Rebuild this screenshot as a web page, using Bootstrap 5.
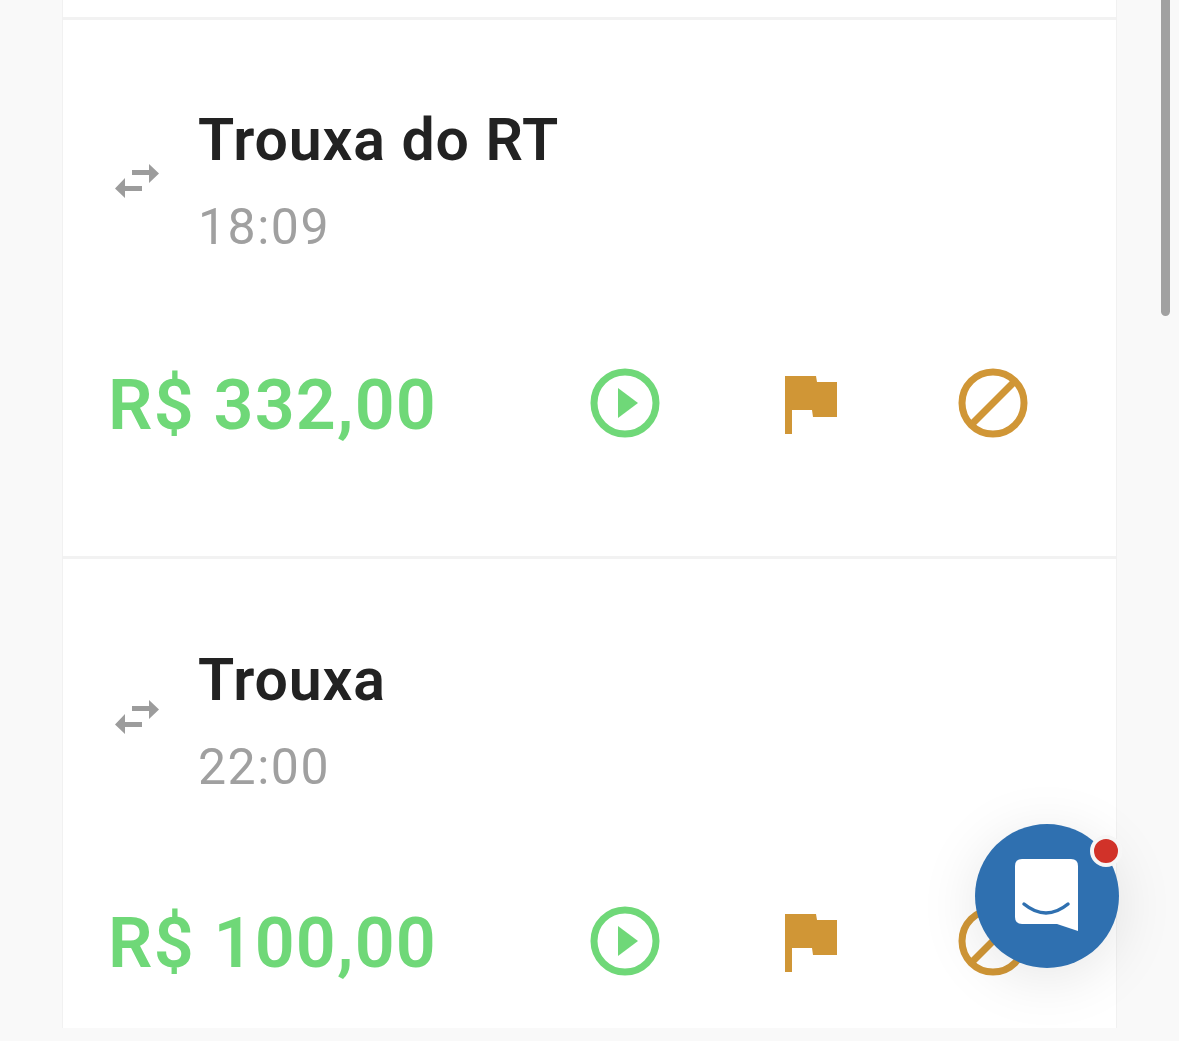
<!DOCTYPE html>
<html lang="pt-BR">
<head>
  <meta charset="UTF-8">
  <title>Trouxas</title>
  <link href="https://cdn.jsdelivr.net/npm/bootstrap@5.3.0/dist/css/bootstrap.min.css" rel="stylesheet">
  <style>
    html, body { height: 100%; overflow: hidden; }
    body { background: #f9f9f9; font-family: Roboto, "Liberation Sans", sans-serif; }
    .page-wrap { height: 1028px; overflow: hidden; padding-left: 62px; padding-right: 62px; }
    .bet-list { width: 1055px; border-left: 1px solid #f1f1f1; border-right: 1px solid #f1f1f1; background: #fff; }
    .bet-stub { height: 20px; border-bottom: 3px solid #f2f2f2; }
    .bet-row { height: 539px; padding: 79px 31px 0 47px; border-bottom: 3px solid #f2f2f2; }
    .bet-row + .bet-row { padding-top: 80px; }
    .bet-row + .bet-row .bet-foot { margin-top: 88px; }
    .bet-head { height: 169px; }
    .swap-icon { width: 46px; height: 36px; margin: 0 38px 5px 4px; flex: none; }
    .bet-row + .bet-row .swap-icon { margin-bottom: 13px; }
    .bet-title { font-size: 59px; line-height: 82px; font-weight: 600; color: #222; letter-spacing: .9px; }
    .bet-time { font-size: 50px; line-height: 82px; margin-top: 5px; font-weight: 400; color: #a0a0a0; letter-spacing: 1.5px; }
    .bet-foot { margin-top: 90px; height: 90px; }
    .bet-price { font-size: 70px; line-height: 90px; font-weight: 600; color: #6fd878; white-space: nowrap; margin-left: -2px; margin-top: 4px; letter-spacing: 1.2px; }
    .act-slot { width: 184px; flex: none; }
    .act-circle { width: 70px; height: 70px; }
    .act-flag { width: 52px; height: 58px; margin-left: 4px; margin-top: 3px; }
    .scroll-thumb { position: fixed; top: -6px; left: 1161px; width: 9px; height: 322px; border-radius: 5px; background: #a1a1a1; }
    .chat-btn { position: fixed; left: 975px; top: 824px; width: 144px; height: 144px; border-radius: 50%; background: #2f70b0; box-shadow: 0 10px 60px rgba(0,0,0,.1); }
    .chat-dot { position: absolute; top: 11px; right: -3px; width: 32px; height: 32px; border-radius: 50%; background: #d13229; border: 4px solid #f6f6f6; }
    .chat-bubble { width: 64px; height: 74px; }
  </style>
</head>
<body>
  <svg width="0" height="0" class="position-absolute">
    <symbol id="i-swap" viewBox="0 0 46 36"><path fill="#9c9c9c" d="M18 7H35V1L45 10.500 35 20V12H18ZM28 23H11V15L1 25.500 11 35V28H28Z"/></symbol>
    <symbol id="i-play" viewBox="0 0 70 70"><circle cx="35" cy="35" r="31" fill="none" stroke="#6fd878" stroke-width="7"/><path fill="#6fd878" d="M28 20 48 35 28 50Z"/></symbol>
    <symbol id="i-flag" viewBox="0 0 52 58"><path fill="#d09636" d="M0 0H31L32 6H52V41H28L27 34H7V58H0Z"/></symbol>
    <symbol id="i-ban" viewBox="0 0 70 70"><circle cx="35" cy="35" r="31" fill="none" stroke="#d09636" stroke-width="7"/><path stroke="#d09636" stroke-width="7" d="M15 55 55 15"/></symbol>
  </svg>

  <div class="page-wrap">
    <div class="bet-list">
      <div class="bet-stub"></div>

      <div class="bet-row">
        <div class="bet-head d-flex align-items-center">
          <svg class="swap-icon"><use href="#i-swap"/></svg>
          <div>
            <div class="bet-title">Trouxa do RT</div>
            <div class="bet-time">18:09</div>
          </div>
        </div>
        <div class="bet-foot d-flex align-items-center">
          <div class="bet-price flex-grow-1">R$ 332,00</div>
          <div class="act-slot d-flex justify-content-center"><svg class="act-circle"><use href="#i-play"/></svg></div>
          <div class="act-slot d-flex justify-content-center"><svg class="act-flag"><use href="#i-flag"/></svg></div>
          <div class="act-slot d-flex justify-content-center"><svg class="act-circle"><use href="#i-ban"/></svg></div>
        </div>
      </div>

      <div class="bet-row">
        <div class="bet-head d-flex align-items-center">
          <svg class="swap-icon"><use href="#i-swap"/></svg>
          <div>
            <div class="bet-title">Trouxa</div>
            <div class="bet-time">22:00</div>
          </div>
        </div>
        <div class="bet-foot d-flex align-items-center">
          <div class="bet-price flex-grow-1">R$ 100,00</div>
          <div class="act-slot d-flex justify-content-center"><svg class="act-circle"><use href="#i-play"/></svg></div>
          <div class="act-slot d-flex justify-content-center"><svg class="act-flag"><use href="#i-flag"/></svg></div>
          <div class="act-slot d-flex justify-content-center"><svg class="act-circle"><use href="#i-ban"/></svg></div>
        </div>
      </div>
    </div>
  </div>

  <div class="scroll-thumb"></div>

  <div class="chat-btn d-flex align-items-center justify-content-center">
    <svg class="chat-bubble" viewBox="0 0 64 74"><path fill="#fff" d="M7 0H56Q63 0 63 7V72L42 65H7Q0 65 0 58V7Q0 0 7 0Z"/><path fill="none" stroke="#2f70b0" stroke-width="3.500" stroke-linecap="round" d="M9 45Q31 63 53 45"/></svg>
    <div class="chat-dot"></div>
  </div>

  <script src="https://cdn.jsdelivr.net/npm/bootstrap@5.3.0/dist/js/bootstrap.bundle.min.js"></script>
</body>
</html>
